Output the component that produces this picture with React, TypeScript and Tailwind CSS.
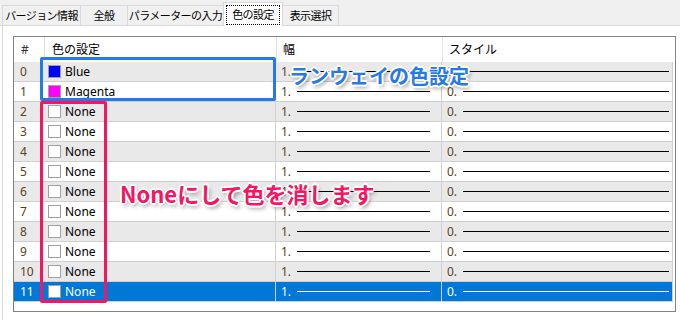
const tabs = [
  { label: "バージョン情報", w: "w-[79px]" },
  { label: "全般", w: "w-[48px]" },
  { label: "パラメーターの入力", w: "w-[97px]" },
  { label: "色の設定", w: "w-[60px]", active: true },
  { label: "表示選択", w: "w-[57px]" },
];

type Row = { name: string; swatch?: string };

const rows: Row[] = [
  { name: "Blue", swatch: "bg-[#0000ff]" },
  { name: "Magenta", swatch: "bg-[#ff00ff]" },
  ...Array.from({ length: 10 }, () => ({ name: "None" })),
];

function TabStrip() {
  return (
    <div className="flex items-end h-[26px] bg-[#f0f0f0] pl-[3px] border-b border-[#d9d9d9] text-[11px] tracking-[-0.6px] whitespace-nowrap">
      {tabs.map((t) =>
        t.active ? (
          <div
            key={t.label}
            className={`${t.w} h-[24px] -mb-px -ml-px relative bg-white border border-b-0 border-[#d9d9d9] flex items-center justify-center px-[2px]`}
          >
            <span className="w-full h-[20px] border border-dotted border-black flex items-center justify-center">
              {t.label}
            </span>
          </div>
        ) : (
          <div
            key={t.label}
            className={`${t.w} h-[20px] -ml-px border border-b-0 border-[#d9d9d9] flex items-center justify-center`}
          >
            {t.label}
          </div>
        )
      )}
    </div>
  );
}

function LineCell({ value, selected, pr }: { value: string; selected: boolean; pr: string }) {
  return (
    <div className={`flex items-center pl-[5px] ${pr} gap-[6px] h-full border-r border-[#d0d0d0]`}>
      <span className={selected ? "text-white" : "text-[#5c4020]"}>{value}</span>
      <span className={`flex-1 h-px ${selected ? "bg-white" : "bg-black"}`} />
    </div>
  );
}

function ColorTable() {
  return (
    <div className="ml-[10px] mt-[9px] w-[663px] h-[276px] border border-[#828282] bg-white">
      <div className="grid grid-cols-[30px_232px_166px_1fr] h-[25px] items-center pr-[2px]">
        <div className="pl-[7px] text-[#333]">#</div>
        <div className="pl-[7px] h-full flex items-center border-l border-[#e5e5e5]">色の設定</div>
        <div className="pl-[6px] h-full flex items-center border-l border-[#e5e5e5]">幅</div>
        <div className="pl-[6px] h-full flex items-center border-l border-[#e5e5e5]">スタイル</div>
      </div>
      {rows.map((r, i) => {
        const selected = i === rows.length - 1;
        const bg = selected ? "bg-[#0078d7] text-white" : i % 2 === 0 ? "bg-[#e9e9e9]" : "bg-white";
        return (
          <div key={i} className="pr-[2px]">
            <div className={`grid grid-cols-[30px_232px_166px_1fr] h-[20px] items-center border-b border-[#d0d0d0] ${bg}`}>
              <div className={`pl-[6px] ${selected ? "text-white" : "text-[#5c4020]"}`}>{i}</div>
              <div className="flex items-center gap-[4px] pl-[4px] h-full border-r border-[#d0d0d0]">
                <span className={`w-[13px] h-[13px] border border-[#a0a0a0] ${r.swatch ?? "bg-white"}`} />
                <span>{r.name}</span>
              </div>
              <LineCell value="1." selected={selected} pr="pr-[11px]" />
              <LineCell value="0." selected={selected} pr="pr-[3px]" />
            </div>
          </div>
        );
      })}
    </div>
  );
}

export default function App() {
  return (
    <div
      className="relative w-[680px] h-[320px] bg-white overflow-hidden text-[12px] text-black leading-none"
      style={{ fontFamily: '"Noto Sans", "Noto Sans CJK JP", sans-serif' }}
    >
      <TabStrip />
      <div className="ml-[2px] h-[294px] border-l border-[#d9d9d9] bg-white pt-px">
        <ColorTable />
      </div>

      {/* callouts drawn over the screenshot */}
      <div className="absolute left-[40px] top-[57px] w-[236px] h-[44px] border-[3px] border-[#2579e8] rounded-[2px]" />
      <div className="absolute left-[40px] top-[101px] w-[67px] h-[202px] border-[3px] border-[#f81460] rounded-[2px]" />

      <div
        className="absolute left-[289px] top-[66px] text-[20px] font-bold text-[#2579e8] [text-shadow:-2px_0_0_#fff,2px_0_0_#fff,0_-2px_0_#fff,0_2px_0_#fff,-1px_-1px_0_#fff,1px_1px_0_#fff,1px_-1px_0_#fff,-1px_1px_0_#fff,2px_3px_4px_rgba(0,0,0,0.45)]"
        style={{ fontFamily: '"Noto Sans CJK JP", sans-serif' }}
      >
        ランウェイの色設定
      </div>
      <div
        className="absolute left-[120px] top-[182px] text-[22px] font-bold text-[#f81460] [text-shadow:-2px_0_0_#fff,2px_0_0_#fff,0_-2px_0_#fff,0_2px_0_#fff,-1px_-1px_0_#fff,1px_1px_0_#fff,1px_-1px_0_#fff,-1px_1px_0_#fff,2px_3px_4px_rgba(0,0,0,0.45)]"
        style={{ fontFamily: '"Noto Sans CJK JP", sans-serif' }}
      >
        Noneにして色を消します
      </div>
    </div>
  );
}
